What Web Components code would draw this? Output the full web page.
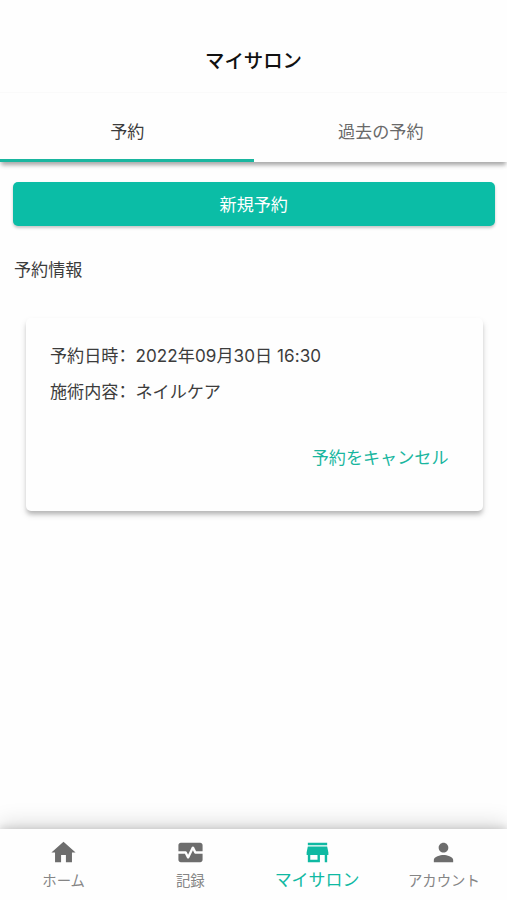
<!DOCTYPE html>
<html lang="ja">
<head>
<meta charset="utf-8">
<title>マイサロン</title>
<style>
html,body{margin:0;height:100%;background:#fefefe}
body{font-family:Inter,"Noto Sans CJK JP",sans-serif;font-size:17.1px;color:#3c3c3c;overflow:hidden}
</style>
</head>
<body>
<salon-app></salon-app>
<script>
const define = (name, html) => customElements.define(name, class extends HTMLElement {
  constructor() {
    super();
    const t = document.createElement('template');
    t.innerHTML = html;
    this.attachShadow({mode: 'open'}).append(t.content.cloneNode(true));
  }
});

define('app-header', `<style>
:host{display:flex;height:93px;box-sizing:border-box;padding-top:27px;align-items:center;justify-content:center;font-size:19.4px;font-weight:500;color:#111;border-bottom:1px solid #fafafa;flex:none}
</style><slot></slot>`);

define('tab-bar', `<style>
:host{display:flex;height:69px;flex:none;background:#fefefe;box-shadow:0 4px 4px -1px rgba(0,0,0,.25),0 5px 5px -2px rgba(0,0,0,.12)}
</style><slot></slot>`);

define('tab-item', `<style>
:host{flex:1;display:flex;align-items:center;justify-content:center;box-sizing:border-box;padding:9px 0 0 1px;border-bottom:3px solid transparent;color:#696969}
:host([selected]){color:#3c3c3c;border-color:#19b69f}
</style><slot></slot>`);

define('primary-button', `<style>
:host{display:block}
button{display:flex;align-items:center;justify-content:center;width:100%;height:44px;padding:0 0 1px;border:0;border-radius:5px;background:#0bbda6;color:#fff;font:inherit;box-shadow:0 2px 3px rgba(0,0,0,.22)}
</style><button><slot></slot></button>`);

define('booking-card', `<style>
:host{display:flex;flex-direction:column;box-sizing:border-box;height:193px;padding:20px 34.5px 0 24.5px;border-radius:5px;background:#fefefe;box-shadow:0 4px 4px -1px rgba(0,0,0,.2),0 4px 7px rgba(0,0,0,.12)}
.action{margin-top:28.6px;align-self:flex-end;line-height:38px;color:#19b69f}
</style><slot></slot><div class="action"><slot name="action"></slot></div>`);

define('info-row', `<style>
:host{display:flex;line-height:36.4px;white-space:pre}
.colon{width:1em;margin-top:-2px;font-family:"Noto Sans CJK SC",sans-serif}
</style><slot name="label"></slot><span class="colon" lang="zh-CN">：</span><slot></slot>`);

define('nav-bar', `<style>
:host{display:grid;grid-template-columns:repeat(4,1fr);height:71px;flex:none;margin-top:auto;background:#fefefe;box-shadow:0 -2px 7px rgba(0,0,0,.12),0 -6px 20px rgba(0,0,0,.13)}
</style><slot></slot>`);

const icons = {
  home: 'M10 20v-6h4v6h5v-8h3L12 3 2 12h3v8z',
  record: 'M15.11 12.45 14 10.24l-3.11 6.21c-.16.34-.51.55-.89.55s-.73-.21-.89-.55L7.38 13H2v5c0 1.1.9 2 2 2h16c1.1 0 2-.9 2-2v-5h-6c-.38 0-.73-.21-.89-.55zM20 4H4c-1.1 0-2 .9-2 2v5h6c.38 0 .73.21.89.55L10 13.76l3.11-6.21c.34-.68 1.45-.68 1.79 0L16.62 11H22V6c0-1.1-.9-2-2-2z',
  store: 'M20 4H4v2h16V4zm1 10v-2l-1-5H4l-1 5v2h1v6h10v-6h4v6h2v-6h1zm-9 4H6v-4h6v4z',
  person: 'M12 12c2.21 0 4-1.79 4-4s-1.79-4-4-4-4 1.79-4 4 1.79 4 4 4zm0 2c-2.67 0-8 1.34-8 4v2h16v-2c0-2.66-5.33-4-8-4z'
};
customElements.define('nav-item', class extends HTMLElement {
  constructor() {
    super();
    this.attachShadow({mode: 'open'}).innerHTML = `<style>
:host{display:flex;flex-direction:column;align-items:center;padding:9px 0 0 .5px;color:#6d6d6d;font-size:14.4px;white-space:nowrap}
:host([selected]){color:#0fb9a2;font-size:17px}
svg{display:block;width:29px;height:29px;fill:currentColor}
span{line-height:26px}
:host(:not([selected])) span{color:#858585;padding-top:1px}
</style><svg viewBox="0 0 24 24"><path d="${icons[this.getAttribute('icon')]}"/></svg><span><slot></slot></span>`;
  }
});

define('salon-app', `<style>
:host{display:flex;flex-direction:column;height:100vh}
main{display:flex;flex-direction:column;padding:19.5px 12.5px 0 13px}
h2{margin:31px 0 0 1px;font:inherit;line-height:26px}
booking-card{margin:35.5px 11.5px 0 12.5px}
.date{letter-spacing:.06px}
</style>
<app-header>マイサロン</app-header>
<tab-bar><tab-item selected>予約</tab-item><tab-item>過去の予約</tab-item></tab-bar>
<main>
<primary-button>新規予約</primary-button>
<h2>予約情報</h2>
<booking-card>
<info-row><span slot="label">予約日時</span><span class="date">2022年09月30日 16:30</span></info-row>
<info-row><span slot="label">施術内容</span>ネイルケア</info-row>
<span slot="action">予約をキャンセル</span>
</booking-card>
</main>
<nav-bar>
<nav-item icon="home">ホーム</nav-item>
<nav-item icon="record">記録</nav-item>
<nav-item icon="store" selected>マイサロン</nav-item>
<nav-item icon="person">アカウント</nav-item>
</nav-bar>`);
</script>
</body>
</html>
